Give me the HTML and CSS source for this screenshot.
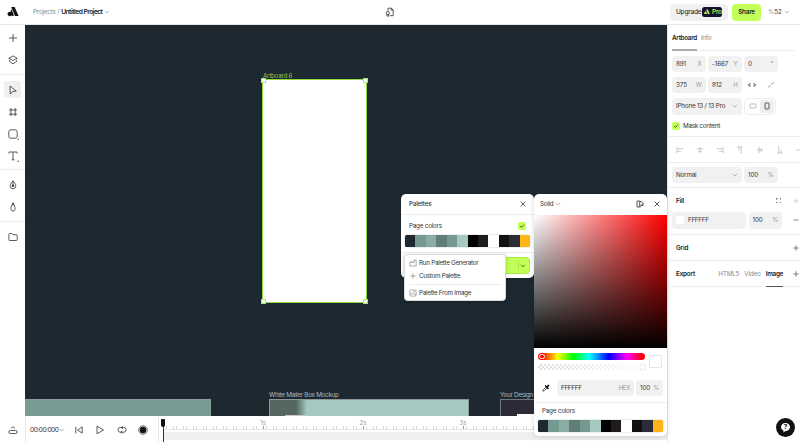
FILE: index.html
```html
<!DOCTYPE html>
<html lang="en">

<head>
    <meta charset="UTF-8">
    <meta name="viewport" content="width=device-width, initial-scale=1.0">
    <title>Untitled Project</title>
    <link rel="stylesheet" href="styles.css">
</head>

<body>
    <div class="app">
        <header class="topbar">
            <svg class="logo" width="12" height="10" viewBox="0 0 12 10"><path d="M4.2 0H7.6L11.6 9H8L4.2 0Z" fill="#111"/><path d="M4.4 2L7 8.6C6.2 9.3 5 9.2 4.3 8.6C3.5 9.3 2 9.3 1.2 8.6C.2 7.7.3 6 1.4 5.3C2 4.9 2.8 5 3.4 5Z" fill="#111"/></svg>
            <div class="crumbs"><span>Projects /</span><b>Untitled Project</b>
                <svg class="chev" width="6" height="4" viewBox="0 0 6 4"><path d="M.8.8L3 3L5.2.8"/></svg>
            </div>
            <svg class="file icon" width="10" height="10" viewBox="0 0 10 10"><path d="M3 3.8V1.2H6.3L8.2 3V8.7H4.8M6.3 1.2V3.2H8.2"/><circle cx="2.8" cy="6" r="1.6"/><path d="M2 7.5V9.3L2.8 8.8L3.6 9.3V7.5"/></svg>
            <div class="top-actions">
                <div class="upgrade">Upgrade
                    <span class="pro"><svg width="6" height="6" viewBox="0 0 12 10"><path d="M4.2 0H7.6L11.6 9H8L4.2 0ZM3.6 3L6 9H1L.3 7Z" fill="#c6ff4d"/></svg>Pro</span>
                </div>
                <div class="share">Share</div>
                <div class="zoom"><i>%</i>52</div>
                <svg class="chev" width="6" height="4" viewBox="0 0 6 4"><path d="M.8.8L3 3L5.2.8"/></svg>
            </div>
        </header>

        <nav class="tools">
            <div class="group">
                <div class="tool"><svg class="icon" width="10" height="10" viewBox="0 0 10 10"><path d="M5 1V9M1 5H9"/></svg></div>
                <div class="tool"><svg class="icon" width="10" height="10" viewBox="0 0 10 10"><path d="M5 .9L9 3.2L5 5.5L1 3.2ZM1 3.2V4.2M9 3.2V4.2M1 6L5 8.9L9 6L8 5.3M1 6L2 5.3"/></svg></div>
            </div>
            <div class="group drawing">
                <div class="tool active"><svg class="icon" width="10" height="10" viewBox="0 0 10 10"><path d="M2 1L8.3 6.1L5 6.4L2.2 9Z"/></svg></div>
                <div class="tool"><svg class="icon" width="10" height="10" viewBox="0 0 10 10"><path d="M3 1V9M7.2 1V9M1 3H9M1 7.2H9"/></svg></div>
                <div class="tool more"><svg class="icon" width="10" height="10" viewBox="0 0 10 10"><rect x=".8" y=".8" width="8.4" height="8.4" rx="2"/></svg></div>
                <div class="tool more"><svg class="icon" width="10" height="10" viewBox="0 0 10 10"><path d="M1 2.5V1H9V2.5M5 1V8.8M3.7 8.8H6.3"/></svg></div>
            </div>
            <div class="group paths">
                <div class="tool"><svg class="icon" width="10" height="10" viewBox="0 0 10 10"><path d="M5 .8C4 2.5 2.2 3.6 2.2 5.7C2.2 7.6 3.4 8.8 5 8.8S7.8 7.6 7.8 5.7C7.8 3.6 6 2.5 5 .8ZM5 1V5"/><circle cx="5" cy="5.7" r=".9" fill="#333"/></svg></div>
                <div class="tool"><svg class="icon" width="10" height="10" viewBox="0 0 10 10"><path d="M5 .6L4 2.8H6ZM4 2.8C3.2 4.5 2.6 6.2 3 7.6C3.4 9.5 6.6 9.5 7 7.6C7.4 6.2 6.8 4.5 6 2.8"/></svg></div>
            </div>
            <div class="group files">
                <div class="tool"><svg class="icon" width="10" height="10" viewBox="0 0 10 10"><path d="M.9 2.3Q.9 1.5 1.7 1.5H3.7L4.8 2.7H8.4Q9.2 2.7 9.2 3.5V7.7Q9.2 8.5 8.4 8.5H1.7Q.9 8.5.9 7.7Z"/></svg></div>
            </div>
            <svg class="collapse icon" width="10" height="10" viewBox="0 0 10 10"><path d="M3 3.5L5 1.7L7 3.5"/><rect x=".8" y="5.5" width="8.4" height="3" rx="1.5"/></svg>
        </nav>

        <main class="canvas">
            <div class="board green"></div>
            <div class="board-label selected-label">Artboard 6</div>
            <div class="board selected"><i class="nw"></i><i class="ne"></i><i class="sw"></i><i class="se"></i></div>
            <div class="board-label mailer-label">White Mailer Box Mockup</div>
            <div class="board mailer"><i></i></div>
            <div class="board-label design-label">Your Design</div>
            <div class="board design"><i></i></div>
        </main>

        <section class="timeline">
            <div class="transport">
                <span class="time">00:00:000</span>
                <svg class="chev" width="6" height="4" viewBox="0 0 6 4"><path d="M.8.8L3 3L5.2.8"/></svg>
                <svg class="icon prev" width="10" height="10" viewBox="0 0 10 10"><path d="M1.8 1.6V8.4M8.2 1.8L3.6 5L8.2 8.2Z"/></svg>
                <svg class="icon play" width="10" height="10" viewBox="0 0 10 10"><path d="M2 1.2L8.5 5L2 8.8Z"/></svg>
                <svg class="icon loop" width="10" height="10" viewBox="0 0 10 10"><path d="M6.3 2.5H3Q1 2.5 1 4.8T3 7.2H3.8M3.8 7.2H7Q9 7.2 9 4.8T7 2.5M4.8 1L6.3 2.5L4.8 4M5.2 5.7L3.7 7.2L5.2 8.7"/></svg>
                <svg class="icon record" width="10" height="10" viewBox="0 0 10 10"><circle cx="5" cy="5" r="4.2"/><circle cx="5" cy="5" r="2.9" fill="#111" stroke="#111"/></svg>
            </div>
            <div class="track">
                <div class="seconds"><span>1s</span><span>2s</span><span>3s</span></div>
                <div class="ruler"></div>
                <div class="bar"></div>
                <div class="playhead"></div>
            </div>
        </section>

        <aside class="inspector">
            <div class="tabs"><b>Artboard</b><span>Info</span></div>
            <div class="row">
                <div class="field">891<i>X</i></div>
                <div class="field">-1667<i>Y</i></div>
                <div class="field">0<i>°</i></div>
            </div>
            <div class="row">
                <div class="field">375<i>W</i></div>
                <div class="field">812<i>H</i></div>
                <svg class="icon link" width="10" height="8" viewBox="0 0 10 8"><path d="M3.5 2L1.5 4L3.5 6M6.5 2L8.5 4L6.5 6M1.5 4H3.3M6.7 4H8.5"/></svg>
                <svg class="icon shrink" width="8" height="8" viewBox="0 0 8 8"><path d="M7 1L4.8 3.2M4.8 1.6V3.2H6.5M1 7L3.2 4.8M1.5 4.8H3.2V6.4"/></svg>
            </div>
            <div class="row">
                <div class="field select">IPhone 13 / 13 Pro
                    <svg class="chev" width="6" height="4" viewBox="0 0 6 4"><path d="M.8.8L3 3L5.2.8"/></svg>
                </div>
                <div class="orient">
                    <span><svg class="icon pale" width="8" height="8" viewBox="0 0 8 8"><rect x="1" y="2" width="6" height="4" rx=".7"/></svg></span>
                    <span class="on"><svg class="icon" width="8" height="8" viewBox="0 0 8 8"><rect x="2" y="1" width="4" height="6" rx=".8"/></svg></span>
                </div>
            </div>
            <div class="mask"><span class="check"><svg width="6" height="6" viewBox="0 0 6 6"><path d="M1 3L2.5 4.4L5 1.6"/></svg></span>Mask content</div>
            <div class="align">
                <svg width="8" height="8" viewBox="0 0 8 8"><path d="M1 1V7M1 2.7H7.5M1 5.2H5"/></svg>
                <svg width="8" height="8" viewBox="0 0 8 8"><path d="M.8 2.7H7.2M2 5.2H6M4 1V7"/></svg>
                <svg width="8" height="8" viewBox="0 0 8 8"><path d="M7 1V7M.5 2.7H7M3 5.2H7"/></svg>
                <svg width="8" height="8" viewBox="0 0 8 8"><path d="M1 1H6.5M3 1V5M5.2 1V7.5"/></svg>
                <svg width="8" height="8" viewBox="0 0 8 8"><path d="M1 4H7M3 .8V7.2M5.2 2.2V5.8"/></svg>
                <svg width="8" height="8" viewBox="0 0 8 8"><path d="M1 7H6.5M2.7 .5V7M5 4V7"/></svg>
                <svg class="chev" width="6" height="4" viewBox="0 0 6 4"><path d="M.8.8L3 3L5.2.8"/></svg>
            </div>
            <div class="row blend">
                <div class="field select">Normal
                    <svg class="chev" width="6" height="4" viewBox="0 0 6 4"><path d="M.8.8L3 3L5.2.8"/></svg>
                </div>
                <div class="field">100<i>%</i></div>
            </div>
            <div class="fill">
                <div class="section-head"><b>Fill</b><span class="dots"></span>
                    <svg class="icon faint" width="6" height="6" viewBox="0 0 6 6"><path d="M3 .5V5.5M.5 3H5.5"/></svg>
                </div>
                <div class="row">
                    <div class="field hex"><span class="chip"></span>FFFFFF</div>
                    <div class="field">100<i>%</i></div>
                    <svg class="icon plus" width="6" height="6" viewBox="0 0 6 6"><path d="M.5 3H5.5"/></svg>
                </div>
            </div>
            <div class="section-head lined"><b>Grid</b>
                <svg class="icon plus" width="6" height="6" viewBox="0 0 6 6"><path d="M3 .2V5.8M.2 3H5.8"/></svg>
            </div>
            <div class="section-head lined"><b>Export</b>
                <div class="formats"><span>HTML5</span><span>Video</span><b>Image</b></div>
                <svg class="icon plus" width="6" height="6" viewBox="0 0 6 6"><path d="M3 .2V5.8M.2 3H5.8"/></svg>
            </div>
        </aside>
    </div>

    <div class="popup palettes">
        <div class="popup-head"><span class="title">Palettes</span>
            <svg class="icon" width="6" height="6" viewBox="0 0 6 6"><path d="M.6.6L5.4 5.4M5.4.6L.6 5.4"/></svg>
        </div>
        <div class="page-colors">Page colors<span class="check"><svg width="6" height="6" viewBox="0 0 6 6"><path d="M1 3L2.5 4.4L5 1.6"/></svg></span></div>
        <div class="swatches"><i class="c1"></i><i class="c2"></i><i class="c3"></i><i class="c4"></i><i class="c2"></i><i class="c5"></i><i class="c6"></i><i class="c7"></i><i class="c8"></i><i class="c9"></i><i class="c10"></i><i class="c11"></i></div>
        <div class="popup-foot">
            <div class="add"><svg width="6" height="4" viewBox="0 0 6 4"><path d="M1 .8L3 2.8L5 .8"/></svg></div>
        </div>
    </div>

    <div class="menu">
        <div class="item"><svg class="icon" width="8" height="8" viewBox="0 0 8 8"><path d="M.8 7V3.2L2.4 2.4V3.6H4.8V1H7.2V7ZM4.8 3.6V2.5"/></svg>Run Palette Generator</div>
        <div class="item"><svg class="icon" width="8" height="8" viewBox="0 0 8 8"><path d="M4 1.2V6.8M1.2 4H6.8"/></svg>Custom Palette</div>
        <div class="item split"><svg class="icon" width="8" height="8" viewBox="0 0 8 8"><rect x=".9" y=".9" width="6.2" height="6.2" rx="1"/><path d="M1 6L3 4L4.5 5.3L5.3 4.6L7 6"/><circle cx="5" cy="2.6" r=".5"/></svg>Palette From Image</div>
    </div>

    <div class="popup picker">
        <div class="popup-head"><span>Solid</span>
            <svg class="chev" width="6" height="4" viewBox="0 0 6 4"><path d="M.8.8L3 3L5.2.8"/></svg>
            <svg class="icon book" width="8" height="8" viewBox="0 0 8 8"><path d="M1 1H3.7V7H1ZM3.7 2L5.3 1.2L7 3.4L3.7 6.8M5 5.6H7V3.5M3.7 7H4.5"/></svg>
            <svg class="icon" width="6" height="6" viewBox="0 0 6 6"><path d="M.6.6L5.4 5.4M5.4.6L.6 5.4"/></svg>
        </div>
        <div class="spectrum"></div>
        <div class="sliders">
            <div class="bars">
                <div class="hue"><i></i></div>
                <div class="alpha"><i></i></div>
            </div>
            <div class="current"></div>
        </div>
        <div class="value">
            <svg width="8" height="8" viewBox="0 0 8 8"><path d="M4.4 2.7L1.2 5.9L.8 7.2L2.1 6.8L5.3 3.6" fill="none" stroke="#222" stroke-width=".7"/><path d="M3.7 2L6 4.3M5 3L6.5 1.5" fill="none" stroke="#111" stroke-width="1.7" stroke-linecap="round"/></svg>
            <div class="field wide">FFFFFF<i>HEX</i></div>
            <div class="field">100<i>%</i></div>
        </div>
        <div class="page-colors">Page colors</div>
        <div class="swatches"><i class="c1"></i><i class="c2"></i><i class="c3"></i><i class="c4"></i><i class="c2"></i><i class="c5"></i><i class="c6"></i><i class="c7"></i><i class="c8"></i><i class="c9"></i><i class="c10"></i><i class="c11"></i></div>
    </div>

    <div class="help"><svg width="11" height="11" viewBox="0 0 11 11"><path d="M5.5 1C8.2 1 10 2.7 10 5S8.2 9 5.5 9L3.5 10.4V8.4C1.9 7.8 1 6.6 1 5C1 2.7 2.8 1 5.5 1Z" fill="#fff"/></svg><span>?</span></div>
</body>

</html>
```

FILE: styles.css
```css
* {
    box-sizing: border-box;
}

body {
    margin: 0;
    width: 800px;
    height: 442px;
    overflow: hidden;
    font-family: Inter, "Liberation Sans", sans-serif;
    font-size: 6.3px;
    letter-spacing: -0.28px;
    line-height: 8px;
    color: #333;
    background: #fff;
}

i {
    font-style: normal;
}

b {
    font-weight: 600;
}

svg {
    display: block;
    flex: none;
}

.app {
    display: grid;
    grid-template-columns: 25px 642px 133px;
    grid-template-rows: 25px 391px 26px;
    height: 442px;
}

.icon {
    fill: none;
    stroke: #333;
    stroke-width: 0.8;
    stroke-linejoin: round;
}

.chev {
    fill: none;
    stroke: #999;
    stroke-width: 0.7;
}

/* top bar */
.topbar {
    grid-column: 1 / 4;
    display: flex;
    align-items: center;
    padding-left: 7px;
    border-bottom: 1px solid #e6e6e6;
}

.crumbs {
    display: flex;
    align-items: center;
    gap: 2px;
    width: 352px;
    margin-left: 14px;
    color: #888;
    white-space: nowrap;
}

.crumbs b {
    color: #222;
    letter-spacing: -0.5px;
    font-size: 6.6px;
}

.crumbs span {
    letter-spacing: -0.2px;
}

.top-actions {
    display: flex;
    align-items: center;
    margin-left: 275px;
}

.upgrade {
    display: flex;
    align-items: center;
    justify-content: space-between;
    width: 58px;
    height: 17px;
    padding: 0 6px;
    border-radius: 4px;
    background: #f1f1f1;
    font-size: 6.6px;
    font-weight: 500;
}

.pro {
    display: flex;
    align-items: center;
    gap: 2px;
    width: 20px;
    height: 10px;
    padding-left: 2px;
    border-radius: 2.5px;
    background: #14122e;
    color: #c6ff4d;
}

.share {
    width: 29px;
    height: 17px;
    margin: 0 7px 0 4px;
    border-radius: 4px;
    background: #c2ff58;
    color: #222;
    font-weight: 600;
    line-height: 17px;
    text-align: center;
    letter-spacing: -0.2px;
}

.zoom {
    width: 16px;
    letter-spacing: 0;
}

.zoom i {
    color: #999;
}

/* left tools */
.tools {
    grid-row: 2 / 4;
    display: flex;
    flex-direction: column;
    padding-top: 0.5px;
}

.group {
    display: flex;
    flex-direction: column;
    gap: 5px;
    align-items: center;
    height: 49px;
    padding-top: 4px;
    border-bottom: 1px solid #ececec;
}

.drawing {
    height: 95px;
    padding-top: 6.5px;
}

.paths {
    height: 52px;
    padding-top: 7px;
}

.files {
    height: 187px;
    padding-top: 6.5px;
    border-bottom: 0;
}

.tool {
    position: relative;
    display: grid;
    place-items: center;
    width: 17px;
    height: 17px;
    border-radius: 3px;
}

.active {
    background: #efefef;
}

.more::after {
    content: "";
    position: absolute;
    right: 2px;
    bottom: 2px;
    border: 0.8px solid #777;
    border-top-color: transparent;
    border-left-color: transparent;
}

.collapse {
    margin: 16px auto 0 7.5px;
}

/* canvas */
.canvas {
    position: relative;
    overflow: hidden;
    background: #1d2830;
}

.board,
.board-label {
    position: absolute;
}

.board-label {
    color: #b4babc;
    white-space: nowrap;
}

.green {
    left: 0;
    top: 374px;
    width: 186px;
    height: 17px;
    background: #769b92;
    border-top: 1px solid #8c9f9b;
    border-right: 1px solid #8c9f9b;
}

.selected-label {
    left: 238px;
    top: 46.5px;
    color: #8bc34a;
}

.selected {
    left: 237px;
    top: 54px;
    width: 105px;
    height: 224px;
    background: #fff;
    border: 1px solid #8edb3b;
}

.selected i {
    position: absolute;
    width: 5px;
    height: 5px;
    border: 1px solid #a6e95e;
    background: #fff;
}

.nw,
.ne {
    top: -2px;
}

.sw,
.se {
    bottom: -2px;
}

.nw,
.sw {
    left: -2px;
}

.ne,
.se {
    right: -2px;
}

.mailer-label {
    left: 244px;
    top: 366px;
}

.mailer {
    left: 244px;
    top: 374px;
    width: 200px;
    height: 20px;
    border: 1px solid #8d9998;
    background: linear-gradient(90deg, #566761, #536661 26px, #a5c9c1 37px);
}

.mailer i {
    position: absolute;
    left: 15px;
    top: 15px;
    width: 22px;
    height: 4px;
    background: #c7c7c7;
}

.design-label {
    left: 475px;
    top: 366px;
}

.design {
    left: 475px;
    top: 374px;
    width: 170px;
    height: 20px;
    border: 1px solid #73777c;
    background: #2d2b37;
}

.design i {
    position: absolute;
    left: 16px;
    top: 14px;
    width: 40px;
    height: 4px;
    background: #fff;
}

/* timeline */
.timeline {
    display: flex;
    border-left: 1px solid #e8e8e8;
}

.transport {
    display: flex;
    align-items: center;
    width: 133px;
    padding: 1px 0 0 4px;
    border-right: 1px solid #e8e8e8;
}

.time {
    width: 27.5px;
    font-size: 6.6px;
    letter-spacing: -0.5px;
}

.transport .chev {
    margin-left: 1px;
}

.prev {
    margin-left: 9.5px;
}

.play {
    margin-left: 11px;
}

.loop {
    margin-left: 12px;
}

.record {
    margin-left: 11px;
}

.track {
    position: relative;
    flex: 1;
    padding-left: 4px;
}

.seconds {
    display: flex;
    height: 10px;
    padding: 3px 0 0 50px;
    color: #999;
    font-size: 6px;
    line-height: 8px;
    letter-spacing: 0;
}

.seconds span {
    width: 100px;
    text-align: center;
}

.ruler {
    height: 4px;
    border-bottom: 1px solid #e3e3e3;
    background:
        repeating-linear-gradient(90deg, #999 0 1px, transparent 1px 100px),
        repeating-linear-gradient(90deg, #d8d8d8 0 0.6px, transparent 0.6px 3.333px) 0 1px;
}

.bar {
    height: 8px;
    margin-top: 2px;
    background: #efefef;
}

.playhead {
    position: absolute;
    left: 2px;
    top: 3px;
    width: 4px;
    height: 8px;
    border-radius: 0.5px 0.5px 2px 2px;
    background: #111;
}

.playhead::after {
    content: "";
    position: absolute;
    left: 1.5px;
    top: 8px;
    width: 1px;
    height: 17px;
    background: #333;
}

/* inspector */
.inspector {
    grid-column: 3;
    grid-row: 2 / 4;
    min-width: 0;
    border-left: 1px solid #e8e8e8;
}

.tabs {
    display: flex;
    gap: 4px;
    height: 26px;
    margin: 0 5px 4.5px 4px;
    padding-top: 9px;
    border-bottom: 1px solid #eee;
    color: #888;
}

.tabs b {
    height: 17px;
    color: #222;
    border-bottom: 2px solid #aaa;
}

.row {
    display: flex;
    align-items: center;
    gap: 2.5px;
    padding-left: 4px;
    margin-bottom: 4.4px;
}

.field {
    display: flex;
    align-items: center;
    justify-content: space-between;
    flex: none;
    width: 33.5px;
    height: 16.8px;
    padding: 0 4px;
    border-radius: 4px;
    background: #f1f1f1;
    white-space: nowrap;
    letter-spacing: -0.1px;
}

.field i {
    color: #999;
    font-size: 6px;
}

.inspector .select {
    width: 69.5px;
    letter-spacing: -0.2px;
}

.link {
    margin-left: 3px;
}

.shrink {
    margin-left: 7px;
    stroke: #bbb;
}

.orient {
    display: flex;
    align-items: center;
    width: 32px;
    height: 17px;
    padding: 1px;
    border: 1px solid #eee;
    border-radius: 4px;
}

.orient span {
    display: grid;
    place-items: center;
    width: 14px;
    height: 13px;
    border-radius: 3px;
}

.orient .on {
    background: #eee;
}

.pale {
    stroke: #aaa;
}

.check {
    display: grid;
    place-items: center;
    width: 8px;
    height: 8px;
    border-radius: 2px;
    background: #c2ff58;
}

.check path,
.add path {
    fill: none;
    stroke: #334411;
    stroke-width: 0.8;
}

.mask {
    display: flex;
    align-items: center;
    gap: 3.5px;
    height: 18px;
    padding: 0 0 4px 3.5px;
    border-bottom: 1px solid #eee;
}

.align {
    display: flex;
    align-items: center;
    height: 25.5px;
    gap: 12px;
    padding-left: 8px;
    border-bottom: 1px solid #eee;
}

.align svg {
    fill: none;
    stroke: #bbb;
    stroke-width: 0.8;
}

.align .chev {
    margin-left: -1px;
}

.blend {
    height: 25.5px;
    margin: 0;
    border-bottom: 1px solid #eee;
}

.fill {
    height: 47px;
    border-bottom: 1px solid #eee;
}

.section-head {
    display: flex;
    align-items: center;
    height: 23.5px;
    padding: 0 1.5px 0 8px;
}

.section-head > b {
    flex: 1;
    color: #222;
    letter-spacing: -0.15px;
}

.fill .section-head {
    padding-top: 1px;
}

.dots {
    width: 5px;
    height: 5px;
    margin-right: 11.5px;
    background: conic-gradient(#777 0 0) 0 0 / 1.5px 1.5px no-repeat, conic-gradient(#777 0 0) 100% 0 / 1.5px 1.5px no-repeat, conic-gradient(#777 0 0) 0 100% / 1.5px 1.5px no-repeat, conic-gradient(#777 0 0) 100% 100% / 1.5px 1.5px no-repeat;
}

.faint {
    stroke: #ccc;
}

.plus {
    stroke: #666;
}

.fill .row svg {
    margin-left: 8.5px;
}

.hex {
    width: 74px;
    justify-content: flex-start;
    gap: 4px;
    letter-spacing: -0.28px;
}

.chip {
    width: 8px;
    height: 8px;
    border-radius: 1.5px;
    background: #fff;
}

.lined {
    height: 26px;
    border-bottom: 1px solid #eee;
}

.formats {
    display: flex;
    gap: 5px;
    height: 26px;
    margin-right: 9.5px;
    line-height: 26px;
    color: #888;
    letter-spacing: -0.15px;
}

.formats b {
    color: #222;
    border-bottom: 1px solid #555;
    letter-spacing: -0.28px;
}

/* floating panels */
.popup {
    position: absolute;
    top: 194px;
    width: 133px;
    border-radius: 5px;
    background: #fff;
    box-shadow: 0 1px 5px rgba(0, 0, 0, 0.15);
}

.popup-head {
    display: flex;
    align-items: center;
    height: 20.5px;
    padding: 0 7px 0 6px;
}

.palettes {
    left: 401px;
    height: 83.5px;
}

.palettes .popup-head {
    padding: 0 8px;
    border-bottom: 1px solid #eee;
}

.title {
    flex: 1;
    font-weight: 500;
    letter-spacing: -0.2px;
}

.page-colors {
    display: flex;
    justify-content: space-between;
    align-items: center;
    height: 20px;
    padding: 3px 8.5px 0 8px;
    letter-spacing: -0.22px;
}

.swatches {
    display: flex;
    height: 12.5px;
    margin: 0 4px;
    overflow: hidden;
    border-radius: 1.5px;
    box-shadow: 0 0 0 0.5px #ddd;
}

.swatches i {
    flex: 1;
}

.c1 { background: #1d2830; }
.c2 { background: #739991; }
.c3 { background: #8aada6; }
.c4 { background: #617d77; }
.c5 { background: #a5c9c1; }
.c6 { background: #030202; }
.c7 { background: #211c1c; }
.c8 { background: #fff; }
.c9 { background: #13110f; }
.c10 { background: #2c2c38; }
.c11 { background: #ffb515; }

.popup-foot {
    display: flex;
    margin-top: 5px;
    padding: 4px;
    border-top: 1px solid #eee;
}

.add {
    display: flex;
    align-items: center;
    justify-content: flex-end;
    width: 125px;
    height: 17px;
    padding-right: 3px;
    border: 1px solid #aee64a;
    border-radius: 4px;
    background: linear-gradient(#a5d84b 0 0) 112px 50% / 0.6px 9px no-repeat #c2ff58;
}

.menu {
    position: absolute;
    left: 404px;
    top: 254px;
    width: 102px;
    height: 47px;
    padding: 2px 4px;
    border: 0.5px solid #ddd;
    border-radius: 3.5px;
    background: #fff;
    box-shadow: 0 1px 4px rgba(0, 0, 0, 0.2);
}

.item {
    display: flex;
    align-items: center;
    gap: 2px;
    height: 12.5px;
    white-space: nowrap;
}

.item .icon {
    stroke: #777;
    stroke-width: 0.6;
}

.split {
    height: 17px;
    margin-top: 1.5px;
    border-top: 1px solid #eee;
}

.picker {
    left: 534px;
    height: 242px;
}

.picker .chev {
    margin: 0 auto 0 2px;
}

.book {
    margin-right: 10px;
}

.spectrum {
    height: 133px;
    background: linear-gradient(transparent, #000), linear-gradient(90deg, #ddd, #f00);
    background: linear-gradient(transparent, #000), linear-gradient(90deg, #fff, #f00);
}

.sliders {
    display: flex;
    gap: 4px;
    height: 31.5px;
    padding: 5.5px 4px 0;
}

.hue,
.alpha {
    position: relative;
    width: 107px;
    height: 6.5px;
    border-radius: 3.5px;
}

.hue {
    margin-bottom: 4px;
    background: linear-gradient(90deg, #f00 4px, #ff0 18%, #0f0 33%, #0ff 48%, #00f 66%, #f0f 83%, #f00 98%);
}

.hue i,
.alpha i {
    position: absolute;
    top: 0.5px;
    width: 5.5px;
    height: 5.5px;
    border-radius: 50%;
}

.hue i {
    left: 1px;
    border: 1px solid #fff;
    background: #f00;
}

.alpha {
    background: linear-gradient(90deg, transparent, #fff), repeating-conic-gradient(#ddd 0 25%, #fff 0 50%) 0 0 / 4px 4px;
}

.alpha i {
    right: 0;
    background: #fff;
    box-shadow: 0 0 1px #999;
}

.current {
    width: 13px;
    height: 13px;
    margin-top: 1.5px;
    border: 1px solid #e5e5e5;
    border-radius: 1px;
}

.value {
    display: flex;
    align-items: center;
    gap: 2px;
    height: 17.5px;
    padding-left: 8px;
    margin-bottom: 5px;
}

.value .wide {
    width: 77px;
    margin-left: 5px;
    letter-spacing: -0.28px;
}

.value .field {
    height: 16.5px;
}

.value .field:last-child {
    width: 27px;
}

.picker .page-colors {
    height: 18px;
    padding: 0 8px;
    border-top: 1px solid #eee;
}

.help {
    position: absolute;
    left: 775.5px;
    top: 417.5px;
    display: grid;
    place-items: center;
    width: 19.5px;
    height: 19.5px;
    border-radius: 50%;
    background: #111;
}

.help > * {
    grid-area: 1 / 1;
}

.help span {
    color: #111;
    font-weight: 700;
}
```
